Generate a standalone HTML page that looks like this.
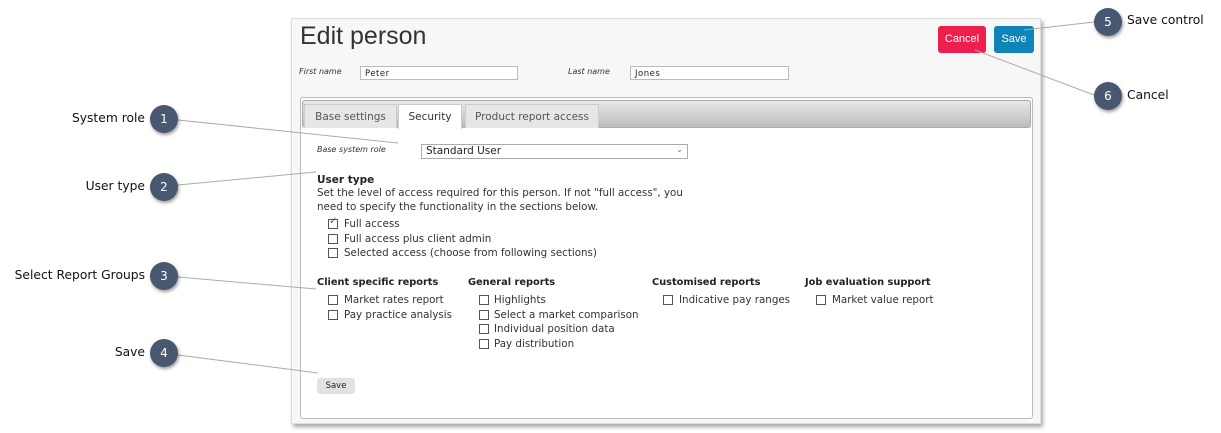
<!DOCTYPE html>
<html><head><meta charset="utf-8"><style>
*{margin:0;padding:0;box-sizing:border-box}
body{width:1221px;height:433px;background:#fff;position:relative;overflow:hidden;font-family:"DejaVu Sans","Liberation Sans",sans-serif;color:#222}
.a{position:absolute;white-space:nowrap}
.panel{position:absolute;left:291px;top:18px;width:750px;height:406px;background:#f7f7f7;border:1px solid #ddd;box-shadow:2px 3px 4px rgba(0,0,0,.35)}
.inner{position:absolute;left:300px;top:97px;width:733px;height:322px;background:#fff;border:1px solid #bbb;border-radius:3px}
.tabbar{position:absolute;left:302px;top:100px;width:729px;height:28px;background:linear-gradient(#e8e8e8,#bcbcbc);border:1px solid #aaa;border-radius:3px}
.tab{position:absolute;top:104px;height:24px;background:#e6e6e6;border:1px solid #ccc;border-bottom:none;font-size:10.5px;color:#555;padding-top:6px;text-align:center}
.t{font-size:10.3px;color:#333}
.b{font-size:9.8px;font-weight:bold;color:#222}
.cb{position:absolute;width:10px;height:10px;border:1px solid #555;background:#fff}
.inp{position:absolute;height:14px;border:1px solid #bbb;background:#fff;font-size:8.5px;padding:2px 4px;letter-spacing:.5px}
.lab{font-size:8px;font-style:italic;color:#333}
.c{position:absolute;width:28px;height:28px;border-radius:50%;background:#475870;color:#fff;font-size:12px;text-align:center;line-height:28px;box-shadow:1px 2px 3px rgba(0,0,0,.4);font-family:"DejaVu Sans",sans-serif}
.cl{font-size:12.3px;color:#111}
</style></head><body>
<div class="panel"></div>
<div class="a" style="left:300px;top:22px;font-size:25px;color:#333;font-family:'Liberation Sans',sans-serif">Edit person</div>
<div class="a" style="left:938px;top:26px;width:48px;height:27px;background:#ee1f4f;border-radius:3px;color:#fff;font-size:11px;text-align:center;line-height:27px;font-family:'Liberation Sans',sans-serif">Cancel</div>
<div class="a" style="left:994px;top:26px;width:40px;height:27px;background:#0e84b8;border-radius:3px;color:#fff;font-size:11px;text-align:center;line-height:27px;font-family:'Liberation Sans',sans-serif">Save</div>
<div class="a lab" style="left:299px;top:67px">First name</div>
<div class="inp" style="left:360px;top:66px;width:158px">Peter</div>
<div class="a lab" style="left:568px;top:67px">Last name</div>
<div class="inp" style="left:630px;top:66px;width:159px">Jones</div>
<div class="inner"></div>
<div class="tabbar"></div>
<div class="tab" style="left:304px;width:93px">Base settings</div>
<div class="tab" style="left:398px;width:64px;background:#fff;height:25px;color:#333">Security</div>
<div class="tab" style="left:465px;width:134px">Product report access</div>
<div class="a lab" style="left:317px;top:145px">Base system role</div>
<div class="a" style="left:421px;top:144px;width:267px;height:15px;border:1px solid #aaa;background:#fff;font-size:10.5px;padding:0 4px">Standard User<span style="position:absolute;right:4px;top:0;color:#666;font-size:8px">&#8964;</span></div>
<div class="a b" style="left:317px;top:174px;font-size:10.5px">User type</div>
<div class="a t" style="left:317px;top:187px">Set the level of access required for this person. If not "full access", you</div>
<div class="a t" style="left:317px;top:201px">need to specify the functionality in the sections below.</div>
<div class="cb" style="left:328px;top:219px"></div><div class="a" style="left:329px;top:216px;font-size:10px;color:#555">✓</div><div class="a t" style="left:344px;top:218px">Full access</div>
<div class="cb" style="left:328px;top:234px"></div><div class="a t" style="left:344px;top:233px">Full access plus client admin</div>
<div class="cb" style="left:328px;top:248px"></div><div class="a t" style="left:344px;top:247px">Selected access (choose from following sections)</div>
<div class="a b" style="left:317px;top:277px">Client specific reports</div>
<div class="cb" style="left:328px;top:295px"></div><div class="a t" style="left:344px;top:294px">Market rates report</div>
<div class="cb" style="left:328px;top:310px"></div><div class="a t" style="left:344px;top:309px">Pay practice analysis</div>
<div class="a b" style="left:468px;top:277px">General reports</div>
<div class="cb" style="left:479px;top:295px"></div><div class="a t" style="left:494px;top:294px">Highlights</div>
<div class="cb" style="left:479px;top:310px"></div><div class="a t" style="left:494px;top:309px">Select a market comparison</div>
<div class="cb" style="left:479px;top:324px"></div><div class="a t" style="left:494px;top:323px">Individual position data</div>
<div class="cb" style="left:479px;top:339px"></div><div class="a t" style="left:494px;top:338px">Pay distribution</div>
<div class="a b" style="left:652px;top:277px">Customised reports</div>
<div class="cb" style="left:663px;top:295px"></div><div class="a t" style="left:679px;top:294px">Indicative pay ranges</div>
<div class="a b" style="left:805px;top:277px">Job evaluation support</div>
<div class="cb" style="left:816px;top:295px"></div><div class="a t" style="left:832px;top:294px">Market value report</div>
<div class="a" style="left:317px;top:378px;width:38px;height:16px;background:#e2e2e2;border-radius:3px;font-size:8.5px;text-align:center;line-height:16px">Save</div>
<svg class="a" style="left:0;top:0" width="1221" height="433"><g stroke="#aaa" stroke-width="1">
<line x1="178" y1="120" x2="398" y2="143"/><line x1="178" y1="185" x2="316" y2="172"/>
<line x1="178" y1="277" x2="316" y2="289"/><line x1="178" y1="355" x2="318" y2="373"/>
<line x1="1094" y1="22" x2="1024" y2="30"/><line x1="1094" y1="95" x2="975" y2="50"/></g></svg>
<div class="c" style="left:150px;top:105px">1</div><div class="a cl" style="right:1076px;top:111px">System role</div>
<div class="c" style="left:150px;top:173px">2</div><div class="a cl" style="right:1076px;top:179px">User type</div>
<div class="c" style="left:150px;top:262px">3</div><div class="a cl" style="right:1076px;top:268px">Select Report Groups</div>
<div class="c" style="left:150px;top:339px">4</div><div class="a cl" style="right:1076px;top:345px">Save</div>
<div class="c" style="left:1094px;top:8px">5</div><div class="a cl" style="left:1127px;top:13px">Save control</div>
<div class="c" style="left:1094px;top:82px">6</div><div class="a cl" style="left:1127px;top:88px">Cancel</div>
</body></html>
